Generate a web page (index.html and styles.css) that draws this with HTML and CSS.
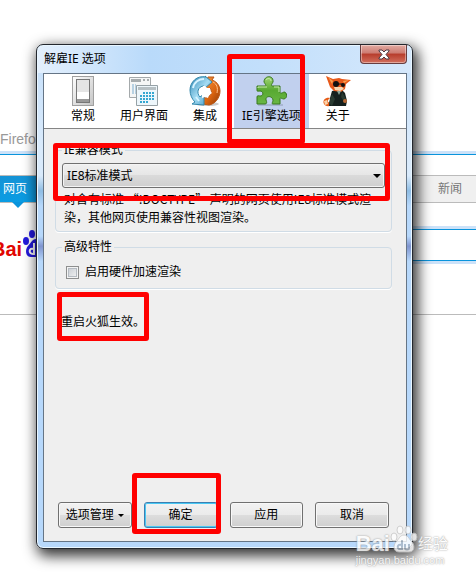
FILE: index.html
```html
<!DOCTYPE html>
<html lang="zh-CN">
<head>
  <meta charset="UTF-8" />
  <meta name="viewport" content="width=device-width, initial-scale=1.0"/>
  <title>解雇IE 选项</title>
  <link rel="stylesheet" href="styles.css">
</head>
<body>
  <!-- Page behind the dialog -->
  <div class="page">
    <div class="page-top">Firefo</div>
    <nav class="page-nav">
      <a class="nav-tab active" href="#">网页</a>
      <a class="nav-tab" href="#">新闻</a>
    </nav>
    <div class="page-search">
      <div class="logo">
        <span class="logo-text">Bai</span>
        <svg class="logo-paw" viewBox="0 0 28 28" width="28" height="28">
          <g fill="#2319dc">
            <ellipse cx="4" cy="11" rx="3" ry="4"/>
            <ellipse cx="10" cy="4" rx="3" ry="4"/>
            <ellipse cx="18" cy="4" rx="3" ry="4"/>
            <ellipse cx="24" cy="11" rx="3" ry="4"/>
            <path d="M14 9c-4 0-5 4-8 7-3 3-3 11 3 11h10c6 0 6-8 3-11-3-3-4-7-8-7z"/>
          </g>
          <path d="M12 13v12M12 19c-5-2-6 5-1 5" fill="none" stroke="#fff" stroke-width="2"/>
        </svg>
      </div>
      <div class="search-box"></div>
    </div>
    <hr class="page-line">
  </div>

  <!-- Options dialog -->
  <div class="dialog">
    <div class="titlebar">
      <span>解雇IE 选项</span>
      <button class="close" aria-label="关闭">
        <svg viewBox="0 0 12 11" width="12" height="11">
          <path d="M1 1h3l2 2 2-2h3v1L8 5.500l3 3.500v1H8L6 8l-2 2H1V9l3-3.500L1 2z" fill="#fff" stroke="#4c3a44" stroke-width="1"/>
        </svg>
      </button>
    </div>

    <div class="client">
      <div class="toolbar">
        <button class="tool">
          <svg viewBox="0 0 32 32" width="32" height="32">
            <defs><linearGradient id="switch" x1="0" y1="0" x2="1" y2="1"><stop offset="0" stop-color="#fff"/><stop offset="1" stop-color="#c4c4c4"/></linearGradient></defs>
            <rect x="5.500" y="1.500" width="21" height="29" fill="url(#switch)" stroke="#a0a0a0"/>
            <rect x="9.500" y="4.500" width="13" height="23" fill="#e5e5e5" stroke="#777"/>
            <path d="M10 17h12v7H10z" fill="#fff"/>
            <path d="M10 24h12v3H10z" fill="#999"/>
          </svg>
          <span>常规</span>
        </button>
        <button class="tool">
          <svg viewBox="0 0 32 32" width="32" height="32">
            <path d="M1.500 2.500h21v20h-21z" fill="#f5f6f6" stroke="#a4a9ab"/>
            <path d="M3 4h10v3H3zM15 4h2v2h-2zM19 4h2v2h-2z" fill="#a7acae"/>
            <path d="M4 10h4M4 12h4M4 14h4M4 16h4M4 18h4" stroke="#7badd0" stroke-dasharray="2 1"/>
            <path d="M8.500 10.500h21v20h-21z" fill="#edf6fb" stroke="#96a1a6"/>
            <path d="M10 12h18v3H10z" fill="#b7c0c4"/>
            <g stroke="#35a7d1" stroke-width="2" stroke-dasharray="2 1">
              <path d="M15 18h12M12 21h15M12 24h15M12 27h9"/>
            </g>
          </svg>
          <span>用户界面</span>
        </button>
        <button class="tool">
          <svg viewBox="0 0 32 32" width="32" height="32">
            <defs>
              <linearGradient id="blue" x1="0" y1="0" x2="1" y2="1"><stop offset="0" stop-color="#2c86b4"/><stop offset=".5" stop-color="#a5dcf3"/><stop offset="1" stop-color="#348ebd"/></linearGradient>
              <linearGradient id="orange" x1="0" y1="0" x2="1" y2="1"><stop offset="0" stop-color="#f7a04b"/><stop offset=".6" stop-color="#db6510"/><stop offset="1" stop-color="#8e3907"/></linearGradient>
            </defs>
            <ellipse cx="18" cy="29" rx="12" ry="2" fill="#ccc"/>
            <path d="M19 2l6 0-2 3c6 2 8 7 8 11 0 7-5 13-11 14l-6-1-3-6 3-2 2 2c6-1 8-6 5-10l-3 1-3 1z" fill="url(#orange)" stroke="#b95818"/>
            <path d="M17 2C8 0 1 7 1 15c0 5 2 9 5 12l-3 2 12 1 0-11-4 3c-4-4-2-11 4-11v3l8-7-7-6z" fill="url(#blue)" stroke="#3287ac"/>
            <path d="M4 13C5 7 10 4 15 4M7 22l3 4" fill="none" stroke="#d6f3ff" stroke-width="2"/>
            <path d="M24 7c4 2 5 6 4 11" fill="none" stroke="#ffc28c" stroke-width="1"/>
            <path d="M16 11l2 2 3 0 0 3 2 2-3 2-1 3-3-1-3 1 0-4-2-2 2-2 1-4z" fill="#fff"/>
          </svg>
          <span>集成</span>
        </button>
        <button class="tool selected">
          <svg viewBox="0 0 32 32" width="32" height="32">
            <defs><linearGradient id="green" x1="0" y1="0" x2="0" y2="1"><stop offset="0" stop-color="#a2d575"/><stop offset=".5" stop-color="#58a932"/><stop offset="1" stop-color="#69b744"/></linearGradient></defs>
            <path d="M3 29h25v2H3z" fill="#8f9bb5" opacity=".5"/>
            <path d="M2 11h8c2 0 0-2-1-4 0-7 10-7 9 0-1 2-3 4 0 4h7v6c0 2 2 1 4 0 3 0 4 6 0 7-2 0-4-2-4 0v5h-7c-2 0 0-2 0-4-1-5-8-4-7 0 1 2 1 4-1 4H2v-7c0-2 2-1 4-1 3-1 2-5-1-5-2 0-3 1-3-1z" fill="url(#green)" stroke="#38791f" stroke-width="1"/>
            <path d="M3 13v-1h9M11 5c1-2 5-2 5 1M19 12h5v5" fill="none" stroke="#c6eaac"/>
          </svg>
          <span>IE引擎选项</span>
        </button>
        <button class="tool">
          <svg viewBox="0 0 32 32" width="32" height="32">
            <path d="M8 23c-4-1-8 2-6 6 2 3 6 3 9 0l-2-2c-2 1-4 0-3-2z" fill="#e65c16"/>
            <path d="M2 26l3-1 1 4-3 1z" fill="#fbd2a8"/>
            <path d="M10 16l9-2 4 4 2 8-1 5H7l1-8z" fill="#15201e"/>
            <path d="M10 19l-3 9 3 3 3-7zM20 17l4 7-1 4-4-6z" fill="#293a31"/>
            <path d="M4 1l7 3 6-1 3 1 9 1-5 4-1 5-4 3-7-1-4-4z" fill="#e7591a"/>
            <path d="M6 2l5 4-1 3zM21 6l6-1-5 3z" fill="#f9a150"/>
            <path d="M12 12l8 0 2 2-4 2-5-1z" fill="#f7d5ae"/>
            <circle cx="14" cy="9" r="3" fill="#111"/>
            <circle cx="21" cy="10" r="2" fill="#111"/>
            <path d="M14 9h7" stroke="#111" stroke-width="1"/>
            <path d="M15 16l2 4 2-4z" fill="#89a397"/>
            <circle cx="23" cy="26" r="2" fill="#b76835"/>
          </svg>
          <span>关于</span>
        </button>
      </div>

      <div class="panel">
        <fieldset class="group">
          <legend>IE兼容模式</legend>
          <div class="select-wrap">
            <select class="mode" aria-label="IE兼容模式">
              <option>IE8标准模式</option>
            </select>
          </div>
          <p class="hint">对含有标准 “!DOCTYPE” 声明的网页使用IE8标准模式渲染，其他网页使用兼容性视图渲染。</p>
        </fieldset>

        <fieldset class="group">
          <legend>高级特性</legend>
          <label class="check"><input type="checkbox"> 启用硬件加速渲染</label>
        </fieldset>

        <p class="note">重启火狐生效。</p>

        <div class="buttons">
          <button class="btn menu">选项管理</button>
          <button class="btn default">确定</button>
          <button class="btn">应用</button>
          <button class="btn">取消</button>
        </div>
      </div>
    </div>

    <!-- Red marks -->
    <div class="mark mark-tab"></div>
    <div class="mark mark-mode"></div>
    <div class="mark mark-note"></div>
    <div class="mark mark-ok"></div>
  </div>

  <!-- Watermark -->
  <div class="watermark">
    <div class="wm-top">
      <span class="wm-bai">Bai</span>
      <svg viewBox="0 0 28 28" width="28" height="28">
        <g fill="#fff" stroke="#c8c8c8" stroke-width="1">
          <ellipse cx="4" cy="12" rx="3" ry="4"/>
          <ellipse cx="10" cy="5" rx="3" ry="4"/>
          <ellipse cx="18" cy="5" rx="3" ry="4"/>
          <ellipse cx="24" cy="12" rx="3" ry="4"/>
          <path d="M14 10c-4 0-5 4-8 7-3 3-3 10 3 10h10c6 0 6-7 3-10-3-3-4-7-8-7z"/>
        </g>
        <path d="M12 15v10M12 20c-5-2-6 5-1 4M15 19v4c0 2 4 2 4 0v-4" fill="none" stroke="#a9b6c4" stroke-width="2"/>
      </svg>
      <span class="wm-name">经验</span>
    </div>
    <div class="wm-url">jingyan.baidu.com</div>
  </div>
</body>
</html>
```
FILE: styles.css
```css
* {
  box-sizing: border-box;
}

body {
  margin: 0;
  min-height: 100vh;
  display: grid;
  position: relative;
  overflow: hidden;
  background: #fff;
  color: #000;
  font-family: "Noto Sans", "Noto Sans CJK SC", sans-serif;
  font-size: 12px;
  line-height: 18px;
}

button, select, input {
  font: inherit;
  color: inherit;
}

p {
  margin: 0;
}

/* the page and the dialog share one cell */
.page, .dialog {
  grid-area: 1 / 1;
  min-width: 0;
}

.page-top {
  padding: 130px 0 6px;
  border-bottom: 1px solid #0a94dc;
  box-shadow: inset 0 -3px #cce2f9;
  color: #999;
  font-family: "Liberation Sans", Arial, sans-serif;
  font-size: 14px;
}

.page-nav {
  display: flex;
  justify-content: space-between;
  margin-top: 20px;
  height: 28px;
  border-top: 1px solid #bbb;
  border-bottom: 1px solid #bbb;
  background: #f0f0f0;
}

.nav-tab {
  padding: 4px 14px;
  color: #777;
  text-decoration: none;
}

.nav-tab.active {
  position: relative;
  padding: 4px 12px 4px 3px;
  background: linear-gradient(#1593d5, #0a9ce3);
  color: #fff;
}

.nav-tab.active::after {
  content: '';
  position: absolute;
  top: 100%;
  left: 12px;
  border: 6px solid transparent;
  border-top-color: #0a94dc;
  border-bottom: none;
}

.page-search {
  display: flex;
  margin-top: 23px;
}

.logo {
  display: flex;
  align-items: flex-end;
  flex: 1;
  margin-left: -9px;
  height: 32px;
}

.logo-text {
  color: #e10601;
  font-family: "Liberation Sans", Arial, sans-serif;
  font-size: 20px;
  font-weight: bold;
  line-height: 18px;
}

.search-box {
  flex: 1;
  height: 32px;
  margin-top: 3px;
  border: 1px solid #0a94dc;
  border-right: none;
  box-shadow: 0 0 0 3px #cce2f9;
}

.page-line {
  margin: 53px 0 0;
  border: none;
  border-top: 1px solid #bbb;
}

.dialog {
  position: relative;
  display: flex;
  flex-direction: column;
  margin: 44px 63px 28px 36px;
  padding: 0 5px 6px 6px;
  border: 1px solid #23272e;
  border-radius: 7px;
  background: linear-gradient(to right, #e4f0fd, #b9dafa 30%, #c2dffb 60%, #d5e8fc) top / 100% 28px no-repeat,
    linear-gradient(#c4dffb, #d9eafb 20%, #d9eafb 26%, #8fbde4 29%, #b7d8fb 32%, #b7d8fb 38%, #7f94cf 40%, #b7d8fb 43%);
  box-shadow: inset 0 0 0 1px #e9f6ff, 3px 5px 14px 2px rgba(0, 0, 0, 0.8);
}

.titlebar {
  display: flex;
  justify-content: space-between;
  height: 28px;
  padding-left: 1px;
  line-height: 28px;
}

.close {
  display: flex;
  align-items: center;
  justify-content: center;
  width: 47px;
  height: 19px;
  padding: 0;
  border: 1px solid #673d40;
  border-top: none;
  border-radius: 0 0 4px 4px;
  background: linear-gradient(#e2aaa2, #cd7b71 45%, #b73c2c 50%, #d2705e);
  box-shadow: inset 0 0 0 1px rgba(255, 255, 255, 0.4);
}

.client {
  flex: 1;
  display: flex;
  flex-direction: column;
  border: 1px solid #657586;
  background: #efefef;
}

.toolbar {
  display: flex;
  gap: 5px;
  padding-left: 15px;
  height: 55px;
  border-bottom: 1px solid #858585;
  background: #fff;
}

.tool {
  display: flex;
  flex-direction: column;
  align-items: center;
  padding: 1px 8px 0;
  border: none;
  background: none;
  white-space: nowrap;
}

.tool.selected {
  background: #c1d0ee;
}

.panel {
  flex: 1;
  display: flex;
  flex-direction: column;
  padding: 12px 14px 13px 11px;
}

.group {
  min-width: 0;
  margin: 0 0 6px;
  padding: 0 6px 5px;
  border: 1px solid #d0dce6;
  border-radius: 4px;
  box-shadow: 0 1px #fff;
}

.group legend {
  padding: 0 2px;
}

.select-wrap {
  position: relative;
  margin: 4px 0 2px;
}

.select-wrap::after {
  content: '';
  position: absolute;
  top: 11px;
  right: 4px;
  border: 4px solid transparent;
  border-top-color: #000;
  border-bottom: none;
}

.mode {
  display: block;
  width: 100%;
  height: 25px;
  padding: 0 4px;
  appearance: none;
  border: 1px solid #707070;
  border-radius: 3px;
  background: linear-gradient(#f0f0f0, #e6e6e6 48%, #dadada 50%, #cfcfcf);
  box-shadow: inset 0 0 0 1px #f4f4f4;
}

.hint {
  padding: 0 8px 0 2px;
  font-family: "Noto Sans CJK SC", sans-serif;
}

.check {
  display: flex;
  align-items: center;
  gap: 6px;
  padding: 7px 4px 2px;
}

.check input {
  width: 13px;
  height: 13px;
  margin: 0;
  appearance: none;
  border: 1px solid #8e8f8f;
  background: linear-gradient(135deg, #c4c9cf, #f6f6f6);
  box-shadow: inset 0 0 0 1px #f4f4f4, inset 0 0 0 2px #b5bbc2;
}

.note {
  margin: 18px 6px 0;
}

.buttons {
  display: flex;
  gap: 12px;
  margin: auto 3px 0;
}

.btn {
  flex: 1;
  height: 26px;
  padding: 0;
  border: 1px solid #707070;
  border-radius: 3px;
  background: linear-gradient(#f2f2f2, #ebebeb 48%, #dddddd 50%, #cfcfcf);
  box-shadow: inset 0 0 0 1px #f8f8f8;
  white-space: nowrap;
}

.btn.default {
  border-color: #3c7fb1;
  box-shadow: inset 0 0 0 1px #48c8f4;
}

.btn.menu::after {
  content: '';
  display: inline-block;
  margin-left: 4px;
  vertical-align: middle;
  border: 3px solid transparent;
  border-top-color: #000;
  border-bottom: none;
}

/* marks lie over the dialog */
.mark {
  position: absolute;
  border: 5px solid #f00;
  border-radius: 3px;
  pointer-events: none;
}

.mark-tab {
  top: 9px;
  left: 190px;
  width: 78px;
  height: 90px;
}

.mark-mode {
  top: 98px;
  left: 16px;
  right: 22px;
  height: 58px;
}

.mark-note {
  top: 247px;
  left: 20px;
  width: 92px;
  height: 49px;
}

.mark-ok {
  bottom: 14px;
  left: 95px;
  width: 89px;
  height: 61px;
}

.watermark {
  position: absolute;
  right: 28px;
  bottom: 10px;
  color: #fff;
  font-family: "Liberation Sans", "Noto Sans CJK SC", sans-serif;
  opacity: 0.8;
  text-shadow: 0 0 2px #999, 0 0 1px #999;
}

.wm-top {
  display: flex;
  align-items: flex-end;
}

.wm-bai {
  font-size: 22px;
  font-weight: bold;
  line-height: 18px;
}

.wm-name {
  font-size: 15px;
  line-height: 18px;
}

.wm-url {
  font-size: 11px;
  line-height: 14px;
}
```
